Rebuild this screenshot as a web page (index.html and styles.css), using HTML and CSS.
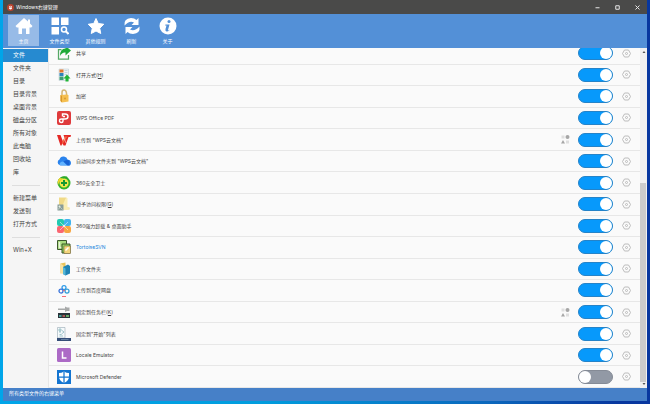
FILE: index.html
```html
<!DOCTYPE html>
<html lang="zh-CN">
<head>
    <meta charset="UTF-8">
    <meta name="viewport" content="width=device-width, initial-scale=1.0">
    <title>Windows右键管理</title>
    <link rel="stylesheet" href="styles.css">
</head>
<body>
    <div class="window">
        <header class="titlebar">
            <svg class="app-icon" viewBox="0 0 14 14"><circle cx="7" cy="7" r="7" fill="#b9432f"/><path d="M4 5q3-3 6 0v4q-3 4-6 0z" fill="#fff"/><path d="M7 3v3M4 6.500h6" stroke="#b9432f"/></svg>
            <span class="title">Windows右键管理</span>
            <button class="win-btn" aria-label="最小化"><svg viewBox="0 0 10 10"><path d="M1 5.500h8"/></svg></button>
            <button class="win-btn" aria-label="最大化"><svg viewBox="0 0 10 10"><path d="M1.500 1.500h7v7h-7z"/></svg></button>
            <button class="win-btn" aria-label="关闭"><svg viewBox="0 0 10 10"><path d="M1 1l8 8M9 1l-8 8"/></svg></button>
        </header>

        <nav class="toolbar">
            <button class="tool active">
                <svg viewBox="0 0 36 36"><path d="M18 2L1 18l2.500 3H7v12q0 1 1 1h6V23h8v11h6q1 0 1-1V21h3.500L35 18l-5-5V5h-4v4z"/></svg>
                <span>主页</span>
            </button>
            <button class="tool">
                <svg viewBox="0 0 36 36"><path d="M1 1h15v15H1zM20 1h15v15H20zM1 20h15v15H1z"/><circle cx="26" cy="25" r="5" fill="none" stroke="#fff" stroke-width="3"/><path d="M29 28l6 6" stroke="#fff" stroke-width="4"/></svg>
                <span>文件类型</span>
            </button>
            <button class="tool">
                <svg viewBox="0 0 36 36"><path d="M18 3l4.500 10 11 1.500-8 8L27.500 33 18 28l-9.500 5 2-10.500-8-8 11-1.500z" stroke="#fff" stroke-width="2" stroke-linejoin="round"/></svg>
                <span>其他规则</span>
            </button>
            <button class="tool">
                <svg viewBox="0 0 36 36"><path d="M3 17Q1 3 16 2q7 0 11 4l4-4v14H17l5-5q-9-5-19 6z"/><path d="M33 19q2 14-13 15-7 0-11-4l-4 4V20h14l-5 5q9 5 19-6z"/></svg>
                <span>刷新</span>
            </button>
            <button class="tool">
                <svg viewBox="0 0 36 36"><circle cx="18" cy="18" r="17"/><circle cx="20" cy="9" r="3" fill="#5390d7"/><path d="M13 15h8l-3 11q0 2 4-1-3 5-7 4-3-1-2-5l2-7h-3z" fill="#5390d7"/></svg>
                <span>关于</span>
            </button>
        </nav>

        <div class="content">
            <aside class="sidebar">
                <a href="#" class="active">文件</a>
                <a href="#">文件夹</a>
                <a href="#">目录</a>
                <a href="#">目录背景</a>
                <a href="#">桌面背景</a>
                <a href="#">磁盘分区</a>
                <a href="#">所有对象</a>
                <a href="#">此电脑</a>
                <a href="#">回收站</a>
                <a href="#">库</a>
                <hr>
                <a href="#">新建菜单</a>
                <a href="#">发送到</a>
                <a href="#">打开方式</a>
                <hr>
                <a href="#">Win+X</a>
            </aside>

            <main class="panel">
                <ul class="list" id="list"></ul>
            </main>

            <div class="scrollbar">
                <svg viewBox="0 0 8 8"><path d="M1 6l3-4 3 4z"/></svg>
                <div class="track"><div class="thumb"></div></div>
                <svg viewBox="0 0 8 8"><path d="M1 2l3 4 3-4z"/></svg>
            </div>
        </div>

        <footer class="statusbar">所有类型文件的右键菜单</footer>
    </div>

    <!-- Icon set used by the list rows -->
    <svg class="sprite">
        <symbol id="share" viewBox="0 0 28 28"><path d="M9 7H3v19h20v-8" fill="none" stroke="#55a865" stroke-width="2.500"/><path d="M17 0l11 9-11 10v-6q-7-1-11 7Q6 5 17 5z" fill="#1faa38"/></symbol>
        <symbol id="openwith" viewBox="0 0 28 28"><path d="M4 2h19v23H4z" fill="#eef3f6" stroke="#b5c4cc"/><path d="M5 3h8v6H5z" fill="#e3772c"/><path d="M5 10h8v6H5z" fill="#2c83b8"/><path d="M5 17h8v7H5z" fill="#3c9e75"/><path d="M15 5h6M15 9h6M15 13h5" stroke="#a6bac6"/><path d="M20 13l7 8h-4v6h-6v-6h-4z" fill="#22b537"/></symbol>
        <symbol id="lock" viewBox="0 0 28 28"><path d="M10 13V7q0-5 4-5t5 6v5" fill="none" stroke="#d4b675" stroke-width="3"/><path d="M7 12l14-1 2 2v12l-13 2-3-3z" fill="#f5bf50"/><path d="M7 12l3 2v13l-3-3z" fill="#d99828"/><circle cx="16" cy="19" r="2" fill="#d89a30"/></symbol>
        <symbol id="pdf" viewBox="0 0 28 28"><rect width="28" height="28" rx="4" fill="#df3a3c"/><path d="M11 11V6h5q6 0 6 5t-6 5H9q-4 0-4 3.500T9 23q3 0 3-3v-4m0-5h4" fill="none" stroke="#fff" stroke-width="2.800"/></symbol>
        <symbol id="wps" viewBox="0 0 28 28"><path d="M0 4h7l5 13 3-8-2-5h15l-1 4h-4l-6 17h-4l-2-5-2 5H7z" fill="#e42825"/><path d="M11 17l5-10h5L9 25z" fill="#f36a45"/><path d="M14 10l4 10" stroke="#fff"/></symbol>
        <symbol id="cloud" viewBox="0 0 28 28"><path d="M5 22a6 6 0 010-11Q7 4 14 5q6 1 7 6 7 1 7 7t-7 5H7z" fill="#2a83ed"/><path d="M5 22q0-7 7-7l9 8z" fill="#61b2ff"/><path d="M13 15q5-5 12-2v10h-4z" fill="#1762d4"/></symbol>
        <symbol id="safe" viewBox="0 0 28 28"><circle cx="14" cy="14" r="11" fill="#f4e64b" stroke="#35b32b" stroke-width="4"/><path d="M1 15q3-10 14-11l8 3-3-6Q9-2 3 7z" fill="#2da92b"/><path d="M2 18q3-10 11-13L5 4Q0 10 2 18z" fill="#f4d52b"/><path d="M14 8v12M8 14h12" stroke="#159832" stroke-width="4"/></symbol>
        <symbol id="access" viewBox="0 0 28 28"><path d="M4 1h15v20h6v4H4z" fill="#f0da87"/><path d="M17 3l4-1v19l5 1-6 4-12-2z" fill="#f9edb2"/><path d="M1 15h12v12H1z" fill="#899d98"/><circle cx="5" cy="19" r="2" fill="#e5eee5"/><path d="M3 25q0-4 4-4l4 4" stroke="#e5eee5" fill="none"/></symbol>
        <symbol id="uninstall" viewBox="0 0 28 28"><rect width="14" height="14" rx="4" fill="#23c9b1"/><rect x="14" width="14" height="14" rx="4" fill="#41b3ed"/><rect y="14" width="14" height="14" rx="4" fill="#fa6671"/><rect x="14" y="14" width="14" height="14" rx="4" fill="#f7a642"/><path d="M6 6l16 16M22 6L6 22" stroke="#fff" stroke-width="2" opacity=".5"/></symbol>
        <symbol id="svn" viewBox="0 0 28 28"><path d="M1 1h18v18H1z" fill="#a8da7c" stroke="#3d582d" stroke-width="2"/><path d="M5 4v11h10" fill="none" stroke="#e8f3da" stroke-width="3"/><path d="M10 8h16v18H10z" fill="#8fcb5d" stroke="#3c562b" stroke-width="2"/><path d="M14 12h13v15H14z" fill="#f4d57c" stroke="#6b5b31"/><path d="M17 21l6-6" stroke="#fff" stroke-width="3"/></symbol>
        <symbol id="work" viewBox="0 0 28 28"><path d="M7 3l10-2v19L7 23z" fill="#e8c45a"/><path d="M7 3l6 4v17l-6-2z" fill="#f8e2a0"/><path d="M12 10l10-5 4 3v15l-9 4-5-3z" fill="#1f83b5"/><path d="M12 10l5 3v14l-5-3z" fill="#55b7d7"/></symbol>
        <symbol id="baidu" viewBox="0 0 28 28"><g fill="none" stroke-width="2.500"><circle cx="14" cy="9" r="4" stroke="#2c9ae8"/><circle cx="8" cy="16" r="4" stroke="#3672da"/><circle cx="20" cy="16" r="4" stroke="#319ed8"/></g><circle cx="14" cy="15" r="1.500" fill="#ef535a"/><path d="M10 27h8" stroke="#f26c79" stroke-width="2"/></symbol>
        <symbol id="taskbar" viewBox="0 0 28 28"><path d="M2 7h14V3l4 2h5v7h-5l-4 2v-4H2z" fill="#a7a9a9"/><path d="M2 16h24v10H2z" fill="#29333a"/><path d="M4 20h5v4H4z" fill="#4d9d96"/><path d="M11 20h5v4h-5z" fill="#a95853"/><path d="M18 20h6v4h-6z" fill="#68a566"/></symbol>
        <symbol id="start" viewBox="0 0 28 28"><path d="M1 1h15v21H1z" fill="#f6fafc" stroke="#849aa6"/><path d="M4 4h4v4H4zM4 10h4M10 7l4 3-5 4M5 15h4M5 18h7" fill="none" stroke="#4f9099"/><path d="M0 22h28v6H0z" fill="#354e78"/><path d="M8 25h15" stroke="#98b5cd"/></symbol>
        <symbol id="locale" viewBox="0 0 28 28"><rect width="28" height="28" rx="3" fill="#ac6ac6"/><path d="M11 7v13h8" fill="none" stroke="#fff" stroke-width="3"/></symbol>
        <symbol id="defender" viewBox="0 0 28 28"><path d="M0 0h28v28H0z" fill="#1475d1"/><path d="M14 3q5 3 10 3v7q0 8-10 13Q4 21 4 13V6q5 0 10-3z" fill="#fff"/><path d="M14 3v23M4 14h20" stroke="#1475d1" stroke-width="2.500"/></symbol>
        <symbol id="group" viewBox="0 0 18 18"><path d="M1 1h6v6H1z" fill="#dedede"/><circle cx="13" cy="4" r="4" fill="#a6a6a6"/><path d="M4 10l4 7H0z" fill="#a6a6a6"/><path d="M10 11h6v6h-6z" fill="#dedede"/></symbol>
        <symbol id="gear" viewBox="0 0 18 18"><path d="M5 2h8l4 7-4 7H5L1 9z" fill="none" stroke="#bcbcbc" stroke-width="2" stroke-linejoin="round"/><circle cx="9" cy="9" r="2" fill="none" stroke="#bcbcbc" stroke-width="2"/></symbol>
    </svg>

    <script>
        const items = [
            { icon: 'share', text: '共享' },
            { icon: 'openwith', text: '打开方式(<u>H</u>)' },
            { icon: 'lock', text: '加密' },
            { icon: 'pdf', text: 'WPS Office PDF' },
            { icon: 'wps', text: '上传到 "WPS云文档"', group: true },
            { icon: 'cloud', text: '自动同步文件夹到 "WPS云文档"' },
            { icon: 'safe', text: '360安全卫士' },
            { icon: 'access', text: '授予访问权限(<u>G</u>)' },
            { icon: 'uninstall', text: '360强力卸载 &amp; 桌面助手' },
            { icon: 'svn', text: 'TortoiseSVN', hot: true },
            { icon: 'work', text: '工作文件夹' },
            { icon: 'baidu', text: '上传到百度网盘' },
            { icon: 'taskbar', text: '固定到任务栏(<u>K</u>)', group: true },
            { icon: 'start', text: '固定到"开始"列表' },
            { icon: 'locale', text: 'Locale Emulator' },
            { icon: 'defender', text: 'Microsoft Defender', off: true }
        ];

        document.getElementById('list').innerHTML = items.map(item => `
            <li class="row">
                <svg class="row-icon"><use href="#${item.icon}"/></svg>
                <label class="${item.hot ? 'name hot' : 'name'}" for="sw-${item.icon}">${item.text}</label>
                ${item.group ? '<svg class="group"><use href="#group"/></svg>' : ''}
                <input type="checkbox" class="switch" id="sw-${item.icon}" ${item.off ? '' : 'checked'}>
                <button class="gear" aria-label="设置"><svg><use href="#gear"/></svg></button>
            </li>`).join('');
    </script>
</body>
</html>
```

FILE: styles.css
```css
* {
    box-sizing: border-box;
}

body {
    margin: 0;
    height: 100vh;
    padding: 0 3px 3px;
    font-family: Inter, 'Noto Sans CJK SC', sans-serif;
    font-size: 5px;
    line-height: 8px;
    color: #444;
    background: linear-gradient(90deg, #00a5e9, #009dde 40%, #0b68bd 75%, #08379f 95%);
}

button {
    padding: 0;
    border: none;
    background: none;
    font: inherit;
    color: inherit;
}

svg {
    display: block;
}

.sprite {
    display: none;
}

.window {
    height: 100%;
    display: flex;
    flex-direction: column;
}

.titlebar {
    height: 14px;
    flex: none;
    display: flex;
    align-items: center;
    padding-left: 4px;
    background: #4a4a49;
    color: #fff;
}

.app-icon {
    width: 7px;
    height: 7px;
}

.title {
    flex: 1;
    margin-left: 2px;
}

.win-btn {
    width: 20px;
    height: 14px;
    display: flex;
    align-items: center;
    justify-content: center;
}

.win-btn svg {
    width: 5px;
    height: 5px;
    fill: none;
    stroke: #e5e5e5;
    stroke-width: 2;
}

.toolbar {
    height: 34px;
    flex: none;
    display: flex;
    gap: 5px;
    padding: 1px 5px 2px;
    background: #5390d7;
}

.tool {
    width: 31px;
    display: flex;
    flex-direction: column;
    align-items: center;
    padding-top: 2px;
    color: #fff;
    white-space: nowrap;
}

.tool.active {
    background: #97bbe7;
}

.tool svg {
    width: 18px;
    height: 18px;
    margin-bottom: 2px;
    fill: #fff;
}

.content {
    flex: 1;
    min-height: 0;
    display: flex;
    background: #fafafa;
}

.sidebar {
    width: 46px;
    flex: none;
    display: flex;
    flex-direction: column;
    padding-top: 1px;
    background: #f5f5f5;
    border-right: 1px solid #e7e7e7;
}

.sidebar a {
    height: 13px;
    padding-left: 10px;
    font-size: 6px;
    line-height: 12px;
    color: #444;
    text-decoration: none;
}

.sidebar a.active {
    background: #268ad0;
    color: #fff;
}

.sidebar hr {
    width: 28px;
    height: 1px;
    margin: 6px 0 6px 9px;
    border: none;
    background: #dedede;
}

.panel {
    flex: 1;
    display: flex;
    overflow: hidden;
}

.list {
    flex: 1;
    display: flex;
    flex-direction: column;
    margin: -5px 0 0;
    padding: 0;
    list-style: none;
}

.row {
    flex: 1;
    display: flex;
    align-items: center;
    padding: 0 9px 0 8px;
    border-bottom: 1px solid #e7e7e7;
}

.row-icon {
    width: 14px;
    height: 14px;
}

.name {
    flex: 1;
    margin-left: 5px;
}

.name.hot {
    color: #1785dc;
}

.group {
    width: 9px;
    height: 9px;
    margin-right: 8px;
}

.switch {
    appearance: none;
    width: 35px;
    height: 14px;
    margin: 0;
    padding: 1px;
    display: flex;
    border: 1px solid #858b96;
    border-radius: 7px;
    background: #9299a5;
}

.switch::before {
    content: '';
    width: 12px;
    height: 12px;
    margin: -1px;
    border-radius: 50%;
    background: #fff;
}

.switch:checked {
    justify-content: flex-end;
    border-color: #2583c8;
    background: #0799fb;
}

.gear {
    margin-left: 9px;
}

.gear svg {
    width: 9px;
    height: 9px;
}

.scrollbar {
    width: 7px;
    flex: none;
    display: flex;
    flex-direction: column;
    align-items: center;
    justify-content: space-between;
    padding: 2px 0;
    background: #f0f0f0;
}

.scrollbar svg {
    width: 4px;
    height: 4px;
    fill: #555;
}

.track {
    flex: 1;
    width: 100%;
    display: flex;
    align-items: flex-end;
    padding: 2px 1px 0 0;
}

.thumb {
    width: 100%;
    height: 61%;
    background: #cbcbcb;
}

.statusbar {
    height: 13px;
    flex: none;
    padding: 1px 6px 2px;
    background: #4680c8;
    color: #fff;
}
```
